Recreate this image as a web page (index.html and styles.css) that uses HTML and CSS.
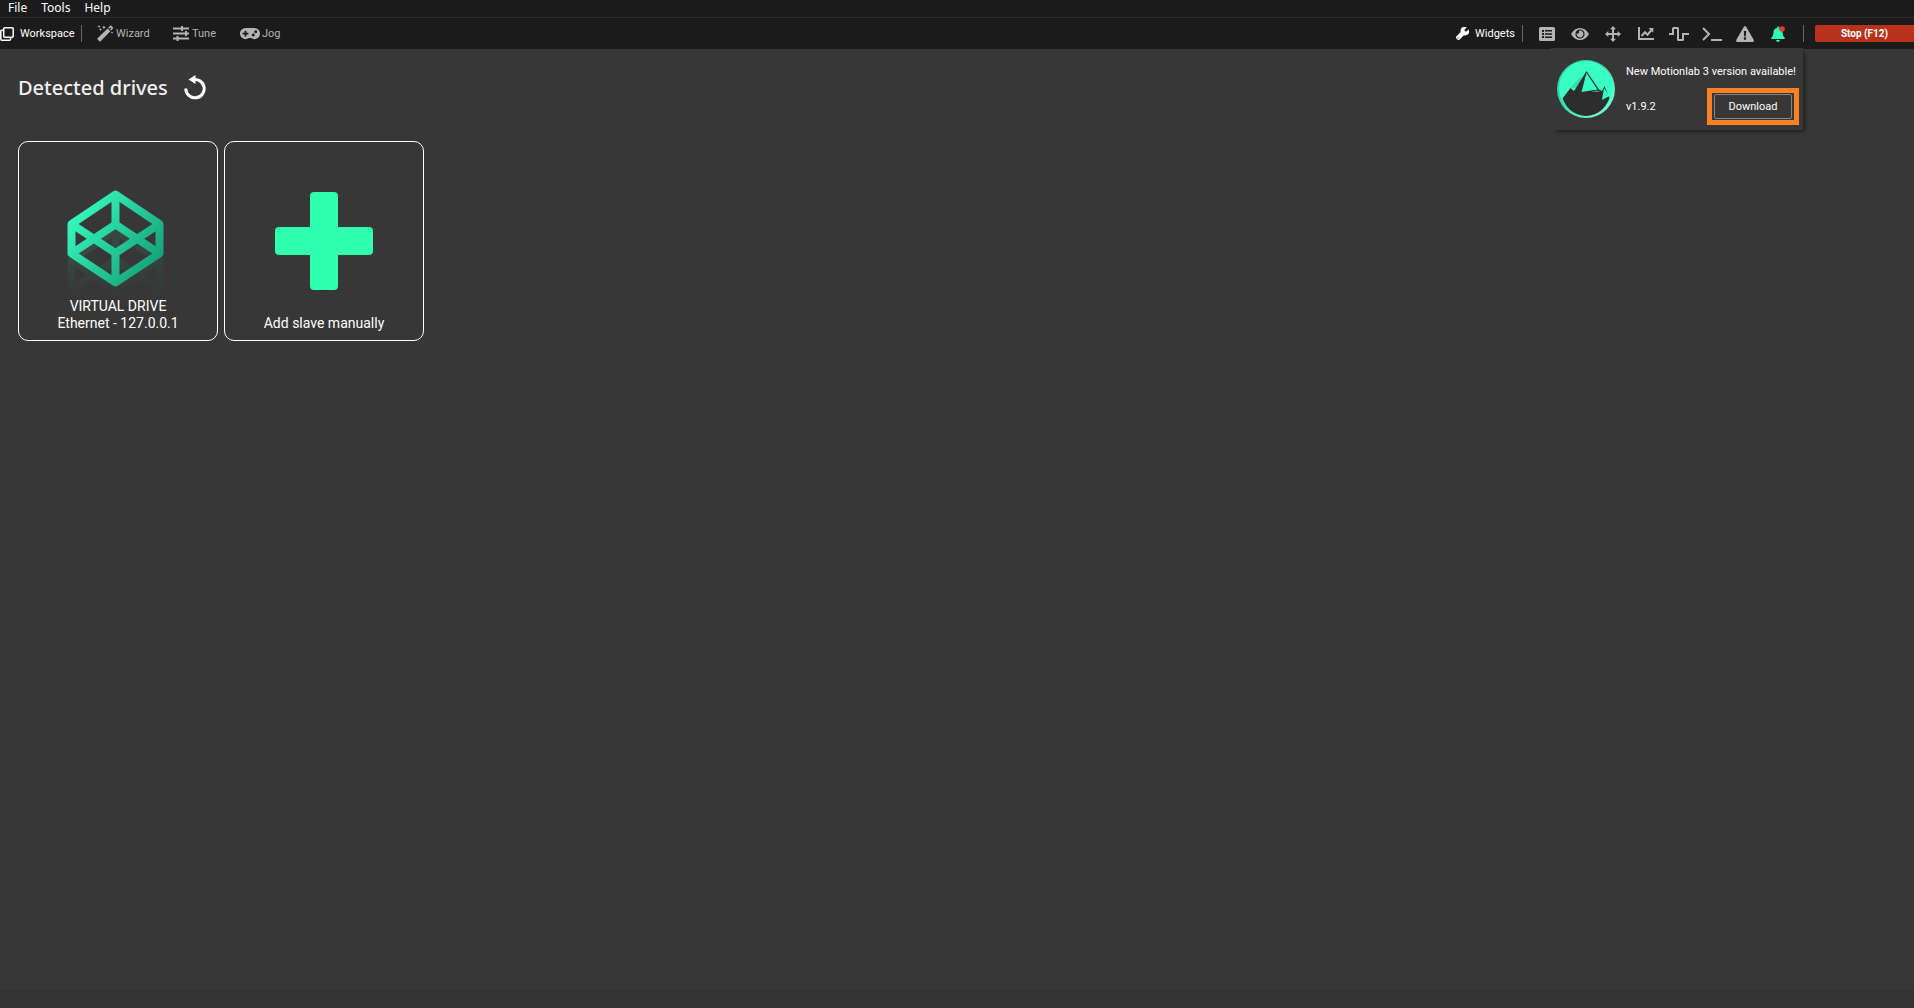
FILE: index.html
```html
<!DOCTYPE html>
<html lang="en">
<head>
<meta charset="UTF-8">
<meta name="viewport" content="width=device-width, initial-scale=1.0">
<title>MotionLab 3</title>
<link rel="stylesheet" href="styles.css">
</head>
<body>
<nav class="menubar">
<button>File</button>
<button>Tools</button>
<button>Help</button>
</nav>

<header class="toolbar">
<button class="tool active workspace">
<svg width="14" height="14" viewBox="0 0 14 14" fill="none" stroke="currentColor" stroke-width="1.5"><rect x="3.7" y="0.8" width="9.5" height="9.5" rx="1"/><path d="M3.5 3.2H1.6Q0.8 3.2 0.8 4V12.2Q0.8 13.2 1.8 13.2H9.5Q10.4 13.2 10.6 12.4V10.5"/></svg>
<span>Workspace</span>
</button>
<span class="divider"></span>
<button class="tool wizard">
<svg width="17" height="17" viewBox="0 0 17 17" fill="currentColor"><path d="M0.6 13.3L10.6 3.4L13.4 6.2L3.6 16.2Q3 16.7 2.4 16.2L0.6 14.4Q0.1 13.9 0.6 13.3Z"/><path d="M11.2 2.8L13.2 0.8Q13.8 0.3 14.4 0.8L16 2.4Q16.5 3 16 3.6L14 5.6L13 4.6L14.3 3.2L13.5 2.4L12.2 3.8Z"/><path d="M1.5 1l.5-1 .5 1 1 .5-1 .5-.5 1-.5-1-1-.5zM6.3 1.7l.6-1.3.6 1.3 1.3.6-1.3.6-.6 1.3-.6-1.3-1.3-.6zM3 4l.5-1 .5 1 1 .5-1 .5-.5 1-.5-1-1-.5zM14.6 7.3l.4-.9.4.9.9.4-.9.4-.4.9-.4-.9-.9-.4z"/></svg>
<span>Wizard</span>
</button>
<button class="tool tune">
<svg width="17" height="15" viewBox="0 0 17 15" fill="currentColor"><path d="M0 1.500h8V0h2v1.500h6v2h-6V5H8V3.500H0zM0 6.500h12V5h2v1.500h2v2h-2V10h-2V8.500H0zM0 11.500h3.500V10h2v1.500H16v2H5.500V15h-2v-1.500H0z"/></svg>
<span>Tune</span>
</button>
<button class="tool jog">
<svg width="20" height="12" viewBox="0 0 20 12" fill="currentColor"><path fill-rule="evenodd" d="M5.500 0h9A5.500 5.500 0 0 1 20 5.800A5.500 5.500 0 0 1 11.200 10H8.800A5.500 5.500 0 0 1 0 5.800A5.500 5.500 0 0 1 5.500 0ZM4.600 2.700v2H2.600v1.800h2v2h1.800v-2h2V4.700h-2v-2ZM13.200 5.500a1.500 1.500 0 1 0 .01 3a1.500 1.500 0 1 0-.01-3ZM15.700 2.300a1.500 1.500 0 1 0 .01 3a1.500 1.500 0 1 0-.01-3Z"/></svg>
<span>Jog</span>
</button>

<div class="tools-right">
<button class="tool active widgets">
<svg width="13" height="13" viewBox="0 0 512 512" fill="currentColor"><path d="M508 109c-2-9-14-12-20-5l-75 74-67-11-12-68 75-74c6-7 3-18-6-21C329-14 262-1 222 39c-43 43-55 106-37 161L19 366c-26 26-26 69 0 95l32 32c26 26 69 26 95 0l166-167c55 19 118 7 161-37 48-48 49-114 35-180zM80 456a24 24 0 1 1 0-48a24 24 0 1 1 0 48z"/></svg>
<span>Widgets</span>
</button>
<span class="divider"></span>
<div class="icons">
<button aria-label="Registers"><svg width="16" height="14" viewBox="0 0 16 14" fill="currentColor"><path fill-rule="evenodd" d="M1.500 0h13Q16 0 16 1.500v11Q16 14 14.500 14h-13Q0 14 0 12.500v-11Q0 0 1.500 0ZM3 3v2h2V3ZM6 3v1.500h7V3ZM3 6v2h2V6ZM6 6.200v1.500h7V6.200ZM3 9v2h2V9ZM6 9.500V11h7V9.500Z"/></svg></button>
<button aria-label="Monitor"><svg width="18" height="12" viewBox="0 0 18 12"><path fill="currentColor" fill-rule="evenodd" d="M9 0Q14.500 0 18 6Q14.500 12 9 12Q3.500 12 0 6Q3.500 0 9 0ZM9 1.400A4.600 4.600 0 1 0 9 10.600A4.600 4.600 0 1 0 9 1.400ZM9 2.600A3.400 3.400 0 1 1 5.800 5Q6.400 6 7.400 5.600Q8.500 5 7.900 3.500Q8 2.700 9 2.600Z"/></svg></button>
<button aria-label="Motion"><svg width="16" height="16" viewBox="0 0 16 16" fill="currentColor"><path d="M8 0l3 3.300H9v3.700h3.700V5L16 8l-3.300 3V9H9v3.700h2L8 16l-3-3.300h2V9H3.300v2L0 8l3.300-3v2H7V3.300H5z"/></svg></button>
<button aria-label="Scope"><svg width="16" height="13" viewBox="0 0 16 13"><path d="M1 0V12H16M3.500 9L7 5.200L9.500 7.700L13.500 3" fill="none" stroke="currentColor" stroke-width="2"/><path d="M10.500 1H15.300V5.800Z" fill="currentColor"/></svg></button>
<button aria-label="Signal generator"><svg width="20" height="14" viewBox="0 0 20 14" fill="none" stroke="currentColor" stroke-width="2"><path d="M0 7H4V1.500Q4 1 4.500 1H8.500Q9 1 9 1.500V12.500Q9 13 9.500 13H13.500Q14 13 14 12.500V7H20"/></svg></button>
<button aria-label="Terminal"><svg width="20" height="14" viewBox="0 0 20 14" fill="none" stroke="currentColor" stroke-width="2"><path d="M1 1L7 7L1 13M9 13H20"/></svg></button>
<button aria-label="Errors"><svg width="18" height="16" viewBox="0 0 18 16" fill="currentColor"><path fill-rule="evenodd" d="M8 .600Q9 -.5 10 .600L17.800 14Q18.200 15.800 16.600 16H1.400Q-.2 15.800 .2 14ZM7.800 5L8.200 10.500H9.800L10.200 5ZM9 11.300A1.300 1.300 0 1 0 9 13.900A1.300 1.300 0 1 0 9 11.300Z"/></svg></button>
<button aria-label="Notifications"><svg width="14" height="16" viewBox="0 0 14 16"><path fill="#2effaf" d="M6.200 .5H7.800V1.700Q11.600 2.500 11.600 7Q11.700 10 13.500 11.500Q14.200 12.500 13.300 13H.7Q-.2 12.500 .5 11.500Q2.300 10 2.400 7Q2.400 2.500 6.200 1.700ZM5 14H9Q8.600 16 7 16Q5.400 16 5 14Z"/><circle cx="11" cy="3" r="2.800" fill="#e53935"/></svg></button>
</div>
<span class="divider"></span>
<button class="stop">Stop (F12)</button>
</div>

<div class="notification">
<svg class="logo" width="58" height="58" viewBox="0 0 58 58">
<defs><linearGradient id="ring" x1="0" y1="0" x2="1" y2="1"><stop offset="0.4" stop-color="#2ed9a6"/><stop offset="0.9" stop-color="#7affd8"/></linearGradient></defs>
<circle cx="29" cy="29" r="29" fill="url(#ring)"/>
<circle cx="29" cy="28" r="27" fill="#3affc4"/>
<path d="M13 28L25 15L21 28Z" fill="#33dfae"/>
<path d="M5.500 38.500L13.500 28L17 31L19 28L29.500 11L42 29.500L45 31L47.500 26L52.500 38Q46 55 29 56Q12 55 5.500 38.500Z" fill="#2d2d2d"/>
<path d="M29.500 13L40.500 29.500L24.500 32Z" fill="#3affc4"/>
<path d="M34 31.500L40 30.500L43 31.500Z" fill="#3affc4"/>
<path d="M47 28L52.500 36L45 40Z" fill="#3affc4"/>
</svg>
<p>New Motionlab 3 version available!</p>
<div class="notification-row">
<span>v1.9.2</span>
<div class="highlight"><button>Download</button></div>
</div>
</div>
</header>

<main>
<div class="title">
<h1>Detected drives</h1>
<button aria-label="Refresh"><svg width="22" height="25" viewBox="0 0 22 25"><path d="M8.500 4.800A9.200 9.200 0 1 1 1.800 13.500" fill="none" stroke="#fff" stroke-width="3"/><path d="M4.500 4.600L11.500 0V9Z" fill="#fff"/></svg></button>
</div>

<div class="drives">
<button class="card">
<svg width="97" height="116" viewBox="0 0 97 116">
<defs>
<linearGradient id="cube" gradientUnits="userSpaceOnUse" x1="12" y1="20" x2="86" y2="76"><stop offset="0" stop-color="#36f5bd"/><stop offset="1" stop-color="#16a47a"/></linearGradient>
<linearGradient id="fade" x1="0" y1="0" x2="0" y2="1"><stop offset="0.5" stop-color="#fff" stop-opacity="0.1"/><stop offset="1" stop-color="#fff" stop-opacity="0"/></linearGradient>
<mask id="mirror"><rect y="20" width="97" height="92" fill="url(#fade)"/></mask>
<g id="codepen" fill="none" stroke="url(#cube)" stroke-width="8" stroke-linejoin="round"><path d="M48.500 4.500L92.500 34V63.500L48.500 92.500L4.500 63.500V34Z"/><path d="M4.500 34L48.500 63L92.500 34M4.500 63.500L48.500 34.500L92.500 63.500M48.500 5V34M48.500 63V92"/></g>
</defs>
<g mask="url(#mirror)"><use href="#codepen" y="36"/></g>
<use href="#codepen"/>
</svg>
<span>VIRTUAL DRIVE<br>Ethernet - 127.0.0.1</span>
</button>
<button class="card add">
<svg width="98" height="98" viewBox="0 0 98 98" fill="#2fffae"><rect x="35" width="28" height="98" rx="4"/><rect y="35" width="98" height="28" rx="4"/></svg>
<span>Add slave manually</span>
</button>
</div>
</main>

<footer></footer>
</body>
</html>
```
FILE: styles.css
```css
* {
box-sizing: border-box;
}
body {
display: flex;
flex-direction: column;
min-height: 100vh;
margin: 0;
background-color: #373737;
color: #fff;
font-family: Roboto, sans-serif;
font-size: 11px;
}
button {
padding: 0;
border: none;
background: none;
color: inherit;
font: inherit;
cursor: pointer;
}
svg {
display: block;
flex-shrink: 0;
}
.menubar {
display: flex;
gap: 14px;
height: 18px;
padding: 0 8px 2px;
background-color: #1b1b1b;
border-bottom: 1px solid #2d2d2d;
font-family: "Noto Sans", sans-serif;
font-size: 12px;
line-height: 14px;
}
.toolbar {
position: relative;
display: flex;
align-items: center;
height: 31px;
background-color: #1b1b1b;
}
.tool {
display: flex;
align-items: center;
gap: 2px;
color: #b4b4b4;
}
.tool.active {
gap: 6px;
color: #fff;
}
.divider {
width: 1px;
height: 17px;
background-color: #666;
}
.workspace {
width: 81px;
}
.wizard {
width: 76px;
margin-left: 15px;
}
.tune {
width: 67px;
}
.tools-right {
display: flex;
align-items: center;
margin-left: auto;
}
.widgets {
width: 66px;
}
.icons {
display: flex;
margin: 0 9px 0 7px;
color: #b4b4b4;
}
.icons button {
display: flex;
align-items: center;
justify-content: center;
width: 33px;
height: 24px;
}
.stop {
width: 99px;
height: 17px;
margin-left: 11px;
border-radius: 2px 0 0 2px;
background-color: #b8321c;
font-size: 10px;
font-weight: bold;
}
.notification {
position: absolute;
top: 30px;
right: 111px;
display: grid;
grid-template-columns: 58px 1fr;
column-gap: 11px;
width: 252px;
height: 82px;
padding: 10px 4px 5px 6px;
background-color: #373737;
box-shadow: 3px 3px 3px -1px #222;
}
.logo {
grid-row: 1 / 3;
margin-top: 2px;
}
.notification p {
margin: 6px 0 0;
line-height: 16px;
white-space: nowrap;
}
.notification-row {
display: flex;
align-items: flex-end;
justify-content: space-between;
line-height: 37px;
}
.highlight {
border: 5px solid #ff8127;
padding: 1px 2px;
line-height: 12px;
}
.highlight button {
display: block;
width: 78px;
height: 25px;
border: 1px solid #858585;
border-radius: 2px;
}
main {
flex: 1;
padding: 22px 18px;
}
.title {
display: flex;
align-items: center;
gap: 16px;
height: 32px;
}
h1 {
margin: 0;
font-family: "Noto Sans", sans-serif;
font-size: 20px;
font-weight: 500;
color: #f0f0f0;
}
.drives {
display: flex;
flex-wrap: wrap;
gap: 6px;
margin-top: 38px;
}
.card {
display: flex;
flex-direction: column;
align-items: center;
justify-content: space-between;
width: 200px;
height: 200px;
padding: 48px 0 8px;
border: 1px solid #fff;
border-radius: 10px;
font-size: 14px;
line-height: 17px;
}
.card svg {
margin: 0 6px -24px 0;
}
.card.add svg {
margin: 2px 0 0;
}
footer {
height: 18px;
background-color: #333;
}
```
